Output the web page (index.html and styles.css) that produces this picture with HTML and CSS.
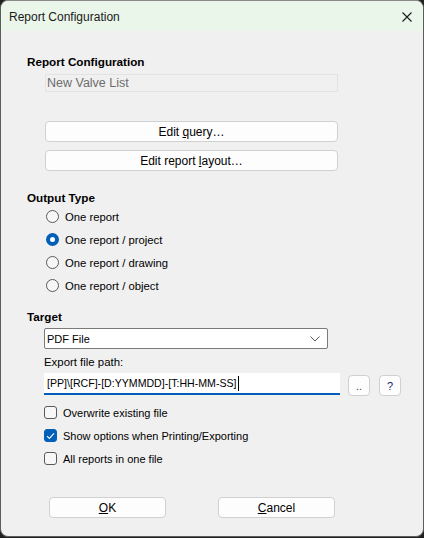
FILE: index.html
```html
<!DOCTYPE html>
<html>
<head>
<meta charset="utf-8">
<link rel="stylesheet" href="styles.css">
</head>
<body>
<div class="window">
  <div class="titlebar">
    <span class="title">Report Configuration</span>
    <svg class="close" width="10" height="10" viewBox="0 0 10 10"><path d="M0.5 0.5 L9.5 9.5 M9.5 0.5 L0.5 9.5" stroke="#1a1a1a" stroke-width="1.1" fill="none"/></svg>
  </div>
  <div class="content">
    <div class="heading h-report">Report Configuration</div>
    <div class="namebox">New Valve List</div>
    <div class="btn wide b-query"><span>Edit <u>q</u>uery…</span></div>
    <div class="btn wide b-layout"><span>Edit report <u>l</u>ayout…</span></div>

    <div class="heading h-output">Output Type</div>
    <div class="radios">
      <div class="row"><span class="radio"></span><span>One report</span></div>
      <div class="row"><span class="radio on"></span><span>One report / project</span></div>
      <div class="row"><span class="radio"></span><span>One report / drawing</span></div>
      <div class="row"><span class="radio"></span><span>One report / object</span></div>
    </div>

    <div class="heading h-target">Target</div>
    <div class="select">
      <span>PDF File</span>
      <svg width="10" height="6" viewBox="0 0 10 6"><path d="M0.5 0.5 L5 5 L9.5 0.5" stroke="#555" stroke-width="1" fill="none"/></svg>
    </div>
    <div class="label">Export file path:</div>
    <div class="pathrow">
      <div class="path"><span>[PP]\[RCF]-[D:YYMMDD]-[T:HH-MM-SS]</span><span class="caret"></span></div>
      <div class="btn small"><span>..</span></div>
      <div class="btn small q"><span>?</span></div>
    </div>
    <div class="checks">
      <div class="row"><span class="check"></span><span>Overwrite existing file</span></div>
      <div class="row"><span class="check on"><svg width="9" height="8" viewBox="0 0 9 8"><path d="M1 4.2 L3.4 6.4 L8 1.4" stroke="#fff" stroke-width="1.1" fill="none"/></svg></span><span>Show options when Printing/Exporting</span></div>
      <div class="row"><span class="check"></span><span>All reports in one file</span></div>
    </div>
    <div class="footer">
      <div class="btn action"><span><u>O</u>K</span></div>
      <div class="btn action"><span><u>C</u>ancel</span></div>
    </div>
  </div>
</div>
</body>
</html>
```

FILE: styles.css
```css
html, body {
  margin: 0;
  padding: 0;
  background: #202020;
  width: 424px;
  height: 538px;
  overflow: hidden;
}
body {
  font-family: "Liberation Sans", Arial, sans-serif;
  font-size: 12px;
  color: #000;
}
.window {
  width: 424px;
  height: 537px;
  box-sizing: border-box;
  background: #f0f0f0;
  border: 1px solid #5c5c5c;
  border-top-color: #8a8a8a;
  border-radius: 8px;
  overflow: hidden;
}
.titlebar {
  height: 30px;
  background: #eaf6ea;
  display: flex;
  align-items: center;
  justify-content: space-between;
  padding: 0 11px 0 8px;
}
.title {
  font-size: 12px;
  color: #1a1a1a;
  padding-top: 1px;
}
.close { margin-top: 1px; }
.content {
  padding-left: 26px;
  padding-top: 23px;
}
.heading {
  font-weight: bold;
  font-size: 11.7px;
  line-height: 15px;
  height: 15px;
}
.namebox {
  margin: 5px 0 0 18px;
  width: 293px;
  height: 18px;
  box-sizing: border-box;
  border: 1px solid #e3e3e3;
  color: #6d6d6d;
  padding-left: 1px;
  line-height: 16px;
  font-size: 12.5px;
}
.btn {
  box-sizing: border-box;
  background: #fdfdfd;
  border: 1px solid #d0d0d0;
  border-radius: 4px;
  display: flex;
  align-items: center;
  justify-content: center;
  color: #000;
}
.btn u { text-underline-offset: 1px; }
.wide {
  margin-left: 18px;
  width: 293px;
  height: 21px;
}
.b-query { margin-top: 29px; }
.b-layout { margin-top: 8px; }
.h-output { margin-top: 19px; }
.radios { margin-left: 19px; font-size: 11.3px; }
.row {
  height: 23px;
  display: flex;
  align-items: center;
}
.radio {
  width: 13px;
  height: 13px;
  box-sizing: border-box;
  border: 1px solid #5a5a5a;
  border-radius: 50%;
  margin-right: 6px;
  background: #f7f7f7;
}
.radio.on {
  border: 4px solid #005fb8;
  background: #fff;
}
.h-target { margin-top: 12px; }
.select {
  margin: 4px 0 0 17px;
  width: 284px;
  height: 21px;
  box-sizing: border-box;
  background: #fff;
  border: 1px solid #7a7a7a;
  border-radius: 2px;
  display: flex;
  align-items: center;
  justify-content: space-between;
  padding: 0 7px 0 2px;
  font-size: 11px;
}
.label {
  margin: 6px 0 0 17px;
  line-height: 15px;
  font-size: 11.4px;
}
.pathrow {
  margin: 3px 0 0 17px;
  display: flex;
  align-items: flex-start;
}
.path {
  width: 296px;
  height: 22px;
  box-sizing: border-box;
  background: #fff;
  border-bottom: 2px solid #005fb8;
  padding: 3px 0 0 3px;
  line-height: 15px;
  font-size: 10.6px;
  display: flex;
  align-items: flex-start;
}
.caret {
  display: inline-block;
  width: 1px;
  height: 15px;
  margin-left: 1px;
  background: #000;
}
.small {
  width: 22px;
  height: 21px;
  margin-top: 2px;
  margin-left: 8px;
  font-size: 11px;
  color: #4a4a4a;
}
.small.q { margin-left: 9px; color: #1a1a6a; }
.checks { margin-left: 17px; margin-top: 5px; font-size: 11px; }
.check {
  width: 13px;
  height: 13px;
  box-sizing: border-box;
  border: 1px solid #5a5a5a;
  border-radius: 3px;
  margin-right: 6px;
  background: #f7f7f7;
  display: flex;
  align-items: center;
  justify-content: center;
}
.check.on {
  background: #005fb8;
  border-color: #005fb8;
}
.footer {
  margin-top: 27px;
  margin-left: 22px;
  display: flex;
  gap: 52px;
}
.action {
  width: 117px;
  height: 21px;
}
```
